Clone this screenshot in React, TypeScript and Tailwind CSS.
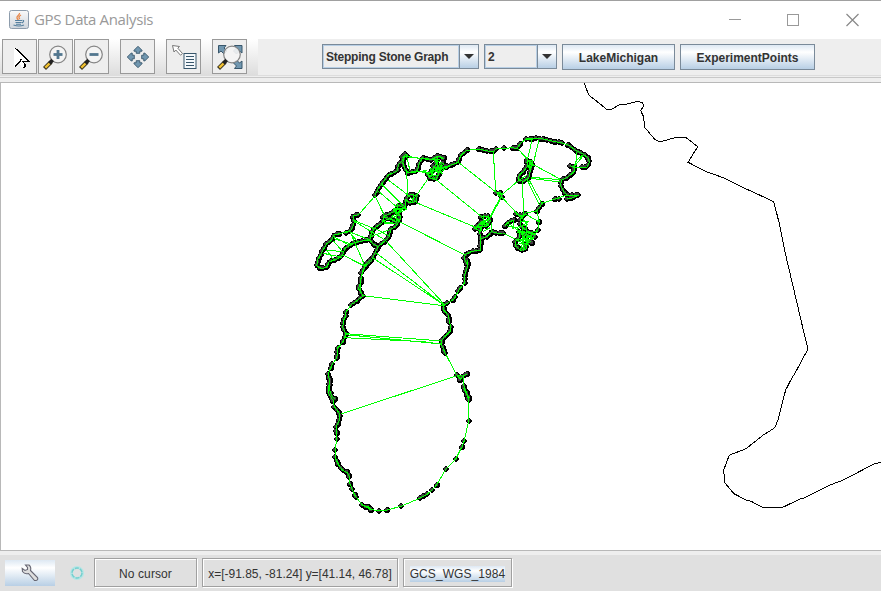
import React from "react";

type Pt = [number, number];

// Survey tracks are stored in third-pixel units relative to a tile origin.
function tile(ox: number, oy: number, s: string): Pt[] {
  return s.trim().split(/\s+/).map((p) => {
    const [x, y] = p.split(",").map(Number);
    return [ox + x / 3, oy + y / 3] as Pt;
  });
}
const A = (s: string) => tile(310, 140, s);
const B = (s: string) => tile(440, 125, s);
const C = (s: string) => tile(310, 260, s);
const D = (s: string) => tile(310, 380, s);

const tracks: Pt[][] = [
  A("195,165 205,145 218,128 235,105 262,93 265,75 278,60 286,42 278,68 285,88 295,98 322,92 328,70 338,54 362,60 385,48 402,55"),
  A("286,42 294,48 276,52"),
  A("385,48 378,72 365,95 352,103 362,116 378,118 385,105 392,85 412,78"),
  A("368,78 385,88 398,70"),
  A("292,174 302,163 322,168 318,185 298,188 288,178 285,205 265,195 258,210 242,220 220,230 218,248 195,263 184,280 179,300 190,313 205,320 222,305 238,290 242,268 258,258 270,240 270,225 258,215"),
  A("220,230 240,236 255,244 266,240"),
  A("179,300 155,303 128,310 105,325 98,345 80,358 58,365 50,382 35,386 20,378 24,358 38,332 50,312 65,300 72,285 88,282"),
  A("108,278 121,272 128,262 133,245 129,228 145,224"),
  A("205,320 192,345 182,365 166,378 160,390"),
  B("0,135 20,125 55,112 62,92 80,76"),
  B("0,95 8,103"),
  B("118,73 145,78 160,80 168,72"),
  B("218,68 232,71 240,56"),
  B("258,42 275,42"),
  B("287,39 310,42 345,50 365,54"),
  B("385,60 410,78 430,88 445,100 448,112 440,127 426,126"),
  B("390,122 405,126 402,140 385,155 365,165 362,180 370,198 380,210 400,211 416,210 397,219 380,222"),
  B("345,222 357,221"),
  B("305,238 298,248 290,258"),
  B("262,105 277,113 270,140 266,160 250,169 235,166 238,150 252,138 262,124 262,105"),
  B("168,203 182,203 185,216"),
  B("123,275 145,273 151,288 140,303 120,304 104,311 125,290"),
  B("124,304 119,322 122,341 141,335 154,320 175,325 188,324"),
  B("122,341 121,376 96,379 77,388 72,400 82,418"),
  B("228,268 245,272 258,266 241,282 240,300 261,318 281,326 262,335 236,320 240,335 226,350 226,362 242,376 258,372 258,357 272,350"),
  B("195,302 205,292 222,285"),
  C("180,0 165,15 162,28"),
  C("153,55 152,68 145,85 155,100 159,108 144,120 124,134"),
  C("108,155 107,168 101,180 98,202 108,222 103,235 98,247"),
  C("83,264 82,280 80,295"),
  C("67,313 62,325"),
  C("54,342 60,365 58,388 65,408 75,418"),
  C("471,0 474,15 465,42 464,68"),
  C("450,85 445,94"),
  C("436,112 429,120"),
  C("412,130 400,137 401,150 416,167 418,187"),
  C("423,202 420,215 402,232 395,242 396,258 405,278"),
  C("440,346 452,357 460,347 470,342"),
  C("462,378 470,400 478,414"),
  D("59,0 56,20 57,43 70,62"),
  D("73,80 90,102 88,122 78,140 80,160"),
  D("75,232 86,255 97,270 112,278 118,290"),
  D("134,345 139,352"),
  D("157,375 168,380 176,378 174,384 184,389"),
  D("461,24 470,42 476,60"),
];

const singles: Pt[] = [
  ...A("152,418 152,400"),
  ...B("193,70 296,290 293,316 285,335 275,353"),
  ...D("75,210 80,178 120,312 127,328 208,392 231,390 273,379 331,354 338,347 351,343 367,330 380,314 408,267 437,237 456,200 463,182 476,122 450,0"),
];

const edges: Pt[][] = [
  A("286,48 324,54 390,60 345,57 290,50"),
  A("290,50 300,92"),
  A("290,95 293,165"),
  A("353,118 320,165"),
  A("195,168 145,225"),
  A("195,168 225,230"),
  A("203,152 265,205"),
  A("216,134 280,198"),
  A("235,120 295,166"),
  A("292,165 322,188"), A("322,165 297,188"), A("310,162 308,190"),
  A("250,205 290,207 262,222 285,200 245,230 270,240"),
  A("262,190 258,250 215,245 270,225 248,210 286,205"),
  A("338,90 375,118 360,85 396,100 372,58 402,72 365,105 388,105"),
  A("382,48 384,100 420,78 352,98"), A("300,98 350,92"), A("322,92 358,102"), A("360,108 392,68"),
  A("135,245 225,300"), A("134,242 195,267"), A("120,275 165,378"), A("120,276 180,300"), A("120,278 143,305"),
  A("70,302 102,340"), A("72,296 128,313"), A("72,290 122,318"), A("50,330 72,362"), A("50,330 98,335"), A("40,340 95,352"), A("100,345 165,380"), A("85,282 121,272"),
  A("160,388 152,420 153,460"),
  A("182,290 242,268"), A("195,265 240,290"), A("222,250 250,252"),
  [[434, 178], [482, 217]],
  [[417, 203], [475, 227]],
  [[400, 222], [465, 255]],
  [[385, 240], [444, 304]],
  [[375, 252], [444, 305]],
  [[373, 258], [444, 305]],
  [[353, 260], [363, 265]],
  B("55,112 170,203"), B("80,76 118,73"), B("168,72 218,68"), B("160,80 167,200 182,218"),
  B("182,216 142,290"), B("184,218 150,280 120,300"), B("185,216 240,275"), B("185,209 238,165"), B("248,169 250,266"),
  B("232,70 265,105"), B("240,56 258,42 287,39"), B("277,42 262,105"), B("297,45 282,107"), B("365,54 385,60"),
  B("278,118 360,162"), B("272,157 362,164"), B("272,160 360,171"), B("262,165 298,240"), B("268,166 306,236"),
  B("408,82 410,105 402,125"), B("430,92 400,128"), B("428,90 405,110"), B("403,128 440,127"), B("305,235 345,222 380,210 416,210"),
  B("254,265 290,258 298,290 293,316 275,345"), B("258,268 296,290"), B("188,324 225,342 270,345"),
  B("205,295 240,320 270,325 230,315"), B("200,302 235,310 265,290 240,290"), B("222,285 218,310 262,300 240,270"),
  B("230,322 285,325 235,350 275,335 250,375 248,310"), B("228,345 265,360 240,320 280,340 230,360 260,345"), B("260,300 262,355 242,372 255,330 293,316"),
  B("122,275 145,300 120,295 148,280 130,272 135,304 105,310"), B("102,308 122,320 128,298"), B("155,295 155,320"), B("128,320 150,308"),
  B("262,108 282,120 265,125 278,108 268,105 272,140 260,110"), B("238,165 262,150"), B("168,203 185,207 175,213"),
  C("162,28 153,55"), C("160,107 400,137"), C("108,221 395,243"), C("108,224 395,252"), C("105,233 340,245 395,253"),
  C("124,134 108,155"), C("98,247 83,264"), C("80,295 67,313 54,342"), C("464,68 447,90 432,117 412,130"), C("418,187 423,202"),
  C("405,278 440,346"), C("460,350 462,378"), C("445,345 463,350"),
  [[456, 376], [341, 414]],
  D("70,62 73,80"), D("80,160 80,178 75,210 76,232"), D("118,290 120,312 134,345 157,375"), D("176,378 180,388 163,378 188,390"),
  D("184,389 208,392 231,390 273,379 331,354 351,343 367,330 380,314 408,267 437,237 456,200 463,182 476,122 476,60"),
];

const coast: Pt[] = [
  ...tile(575, 75, "28,24 41,60 67,80 95,103 110,103 133,89 155,87 188,79 202,83 206,92 197,107 205,123 210,158 240,194 255,200 275,195 300,188 332,187 368,215 339,262 397,291 445,308 500,336 545,356 596,380 612,442 632,540"),
  ...tile(680, 330, "370,0 384,58 368,86 345,130 335,145 317,180 305,225 295,268 285,292 270,303 250,315 198,356 165,369 150,374 146,380 131,420 134,458 162,491 200,511 213,514 248,532 308,532 362,506 375,503 450,465 490,450 580,403 603,396"),
];

function sample(pts: Pt[], step: number): Pt[] {
  const out: Pt[] = [pts[0]];
  let carry = 0;
  for (let i = 1; i < pts.length; i++) {
    const [x0, y0] = pts[i - 1];
    const [x1, y1] = pts[i];
    const len = Math.hypot(x1 - x0, y1 - y0);
    let d = step - carry;
    while (d <= len) {
      out.push([x0 + ((x1 - x0) * d) / len, y0 + ((y1 - y0) * d) / len]);
      d += step;
    }
    carry = len - (d - step);
  }
  out.push(pts[pts.length - 1]);
  return out;
}

const str = (p: Pt[]) => p.map(([x, y]) => `${x.toFixed(1)},${y.toFixed(1)}`).join(" ");

function GpsMap() {
  const dots = [...tracks.flatMap((t) => sample(t, 3.9)), ...singles];
  return (
    <svg className="block h-[467px] w-[880px]" viewBox="1 83 880 467" shapeRendering="crispEdges" fill="none">
      <polyline points={str(coast)} stroke="#000" strokeWidth="1" />
      {tracks.map((t, i) => (
        <polyline key={i} points={str(t)} stroke="#000" strokeWidth="4.4" strokeLinejoin="round" strokeLinecap="round" />
      ))}
      {dots.map(([x, y], i) => (
        <path
          key={i}
          transform={`translate(${Math.round(x) - 3} ${Math.round(y) - 3})`}
          d={i % 3 === 1 ? "M2 0H5V1H6V5H5V6H1V5H0V2H1V1H2Z" : "M2 0H4V1H5V2H6V4H5V5H4V6H2V5H1V4H0V2H1V1H2Z"}
          fill="#000"
        />
      ))}
      {dots.map(([x, y], i) => (
        <rect key={i} x={Math.round(x) - 2} y={Math.round(y) - 2} width="3" height="3" fill="#404040" />
      ))}
      {tracks.map((t, i) => (
        <polyline key={i} points={str(t)} stroke="#00ff00" strokeWidth="1" />
      ))}
      {edges.map((t, i) => (
        <polyline key={i} points={str(t)} stroke="#00ff00" strokeWidth="1" />
      ))}
    </svg>
  );
}

function Magnifier({ plus, children }: { plus?: boolean; children?: React.ReactNode }) {
  return (
    <svg className="h-[33px] w-[33px]" viewBox="0 0 33 33" fill="none">
      {children}
      <circle cx="19" cy="14.5" r="8.3" fill="#f4f4f4" fillOpacity="0.9" stroke="#858585" strokeWidth="1.2" />
      <path d="M5.5 28.5 L12 22" stroke="#3a3420" strokeWidth="4.2" />
      <path d="M6.3 27.7 L11.5 22.5" stroke="#f2c230" strokeWidth="2.4" />
      <path d="M10.5 23.5 L13.6 20" stroke="#222" strokeWidth="3.6" />
      {!children && <path d="M14.5 14.5 H23.5" stroke="#52778f" strokeWidth="2.8" />}
      {plus && <path d="M19 10 V19" stroke="#52778f" strokeWidth="2.8" />}
    </svg>
  );
}

function ToolButton({ children, className = "" }: { children: React.ReactNode; className?: string }) {
  return (
    <button className={`h-[35px] w-[35px] shrink-0 border border-[#999] bg-[#eee] ${className}`}>{children}</button>
  );
}

function Combo({ label, className }: { label: string; className: string }) {
  return (
    <div className={`flex h-[25px] border border-[#7a8a99] text-[12px] font-bold ${className}`}>
      <div className="flex-1 border border-[#b8cfe5] pl-[2px] leading-[22px] tracking-[-0.22px] whitespace-nowrap">{label}</div>
      <div className="flex w-[19px] items-center justify-center border-l border-[#7a8a99] bg-[linear-gradient(#dde8f3,#fff_30%,#b8cfe5)]">
        <svg className="h-[5px] w-[10px]" viewBox="0 0 10 5"><path d="M0 0H10L5 5Z" fill="#333" /></svg>
      </div>
    </div>
  );
}

function PushButton({ label, className }: { label: string; className: string }) {
  return (
    <button className={`h-[26px] border border-[#7a8a99] bg-[linear-gradient(#dde8f3,#fff_30%,#b8cfe5)] pt-[2px] text-[12px] font-bold ${className}`}>{label}</button>
  );
}

const etched = "flex h-[29px] items-center justify-center border border-[#a0a0a0] pt-[2px] whitespace-nowrap shadow-[inset_1px_1px_0_#fff,1px_1px_0_#fff]";

export default function App() {
  return (
    <div className="flex h-[591px] w-[881px] flex-col overflow-hidden bg-[#eee] font-['Liberation_Sans',sans-serif] text-[#333]">
      <header className="flex h-[39px] items-center border-t border-[#a0a0a0] bg-white pl-[9px]">
        <svg className="mt-[-2px] h-[19px] w-[20px]" viewBox="0 0 20 19" fill="none">
          <defs>
            <linearGradient id="cup" x2="0" y2="1"><stop stopColor="#fafafa" /><stop offset="1" stopColor="#cfd5dc" /></linearGradient>
          </defs>
          <rect x="0.5" y="0.5" width="19" height="18" rx="2" fill="url(#cup)" stroke="#8d9cac" />
          <path d="M10.5 3 C11 5 7 6 8 8 Q8.2 9 9.5 10 M12 5 C9.5 6.5 9.5 7.5 10.8 9" stroke="#e8884a" strokeWidth="1.3" />
          <path d="M6 10.5 H13 M6.5 12.5 H12.5 M13.5 10.2 Q16 10.5 13 13 M4.5 15 Q10 17 15 15 M7 14.2 H12" stroke="#55809f" strokeWidth="1.1" />
        </svg>
        <h1 className="mt-[-2px] ml-[5px] w-[120px] text-[15px] tracking-[-0.36px] whitespace-nowrap text-[#999] font-['Open_Sans',sans-serif]">GPS Data Analysis</h1>
        <svg className="mt-[-1px] ml-auto mr-[22px] h-[14px] w-[130px]" viewBox="0 0 130 14" fill="none" stroke="#999" strokeWidth="1">
          <path d="M0 6.5 H12" /><rect x="58.5" y="1.5" width="11" height="11" /><path d="M117.5 1 L129.5 13 M129.5 1 L117.5 13" stroke="#888" strokeWidth="1.2" />
        </svg>
      </header>

      <section className="flex h-[44px] flex-col">
        <div className="flex h-[37px] border-b border-[#ddd]">
          <div className="flex w-[258px] bg-[linear-gradient(#fff,#ddd)] pl-[2px]">
            <ToolButton>
              <svg className="h-[33px] w-[33px]" viewBox="0 0 33 33" fill="none" shapeRendering="crispEdges">
                <path d="M10.5 7.5 V28 L16 22 L19 28 L23 25 L20.5 21 H27Z" fill="#fff" />
                <path d="M12 8 L26.5 21.5 H19 M11.5 27.5 L17.5 21 L18 19 M19 21 L22 24 V27 L20 28" stroke="#000" strokeWidth="1.3" />
              </svg>
            </ToolButton>
            <ToolButton className="ml-px"><Magnifier plus /></ToolButton>
            <ToolButton className="ml-px"><Magnifier /></ToolButton>
            <ToolButton className="ml-[11px]">
              <svg className="h-[33px] w-[33px]" viewBox="0 0 33 33" fill="#7197b0" stroke="#38566b" strokeWidth="0.9">
                {[0, 90, 180, 270].map((a) => (
                  <path key={a} transform={`rotate(${a} 17 17)`} d="M17 6.3 L21 10.3 V11.2 H18.8 V13.3 H15.2 V11.2 H13 V10.3Z" />
                ))}
              </svg>
            </ToolButton>
            <ToolButton className="ml-[11px]">
              <svg className="h-[33px] w-[33px]" viewBox="0 0 33 33" fill="none">
                <path d="M5.5 5.5 L12.5 6.5 L10.8 8.2 L15.5 13.5 L13.5 15.2 L8.8 10 L7 12Z" fill="#fff" stroke="#777" />
                <rect x="17" y="13.5" width="12" height="15" fill="#f5f9fc" stroke="#38566b" />
                <path d="M19 16.5H27 M19 19.5H27 M19 22.5H27 M19 25.5H27" stroke="#38566b" />
              </svg>
            </ToolButton>
            <ToolButton className="ml-[11px]">
              <Magnifier>
                <g fill="#7197b0" stroke="#38566b" strokeWidth="1">
                  <path d="M5.5 5.5 H13 L11 8 L14 11 L11 14 L8 11 L5.5 13Z" />
                  <path d="M29 5.5 H21.5 L23.5 8 L20.5 11 L23.5 14 L26.5 11 L29 13Z" />
                  <path d="M29 28.5 H21.5 L23.5 26 L20.5 23 L23.5 20 L26.5 23 L29 21Z" />
                </g>
              </Magnifier>
            </ToolButton>
          </div>
          <div className="flex flex-1 pt-[5px] pl-[64px]">
            <Combo label="Stepping Stone Graph" className="w-[157px]" />
            <Combo label="2" className="ml-[5px] w-[73px]" />
            <PushButton label="LakeMichigan" className="ml-[5px] w-[113px]" />
            <PushButton label="ExperimentPoints" className="ml-[5px] w-[135px]" />
          </div>
        </div>
        <div className="mt-px h-[6px] border-t border-b border-t-[#c8c8c8] border-b-[#b8b8b8]" />
      </section>

      <main className="h-[468px] border-b border-l border-[#b8b8b8] bg-white">
        <GpsMap />
      </main>

      <footer className="mt-[4px] flex h-[36px] bg-[#e0e0e0] pt-[3px] pl-[5px] text-[12px]">
        <button className="mt-[2px] flex h-[26px] w-[50px] items-center justify-center bg-[linear-gradient(#dde8f3,#fff_30%,#b8cfe5)]">
          <svg className="h-[18px] w-[18px]" viewBox="0 0 18 18" fill="#ddd" stroke="#666673" strokeWidth="1.1">
            <path d="M4.5 1 L8 1 Q10.5 3 9.5 6.5 L16.5 13.5 Q17.5 16 15 16.5 L13.5 16.5 L7.5 9.5 Q3.5 10.5 1.5 7.5 L1.2 4.5 L4 6.5 L6.5 5.5 L6.5 3.5Z" />
          </svg>
        </button>
        <svg className="mt-[8px] ml-[15px] h-[14px] w-[14px]" viewBox="0 0 14 14" fill="none">
          <circle cx="7" cy="7" r="5.5" stroke="#b6e6e6" strokeWidth="3" />
          <circle cx="7" cy="7" r="5" stroke="#76cfce" strokeWidth="1.5" strokeDasharray="4 1.2" />
        </svg>
        <div className={`${etched} ml-[10px] w-[103px] text-[12px] tracking-[0.1px]`}>No cursor</div>
        <div className={`${etched} ml-[5px] w-[196px] tracking-[-0.02px]`}>x=[-91.85, -81.24] y=[41.14, 46.78]</div>
        <div className={`${etched} ml-[5px] w-[109px]`}>
          <span className="h-[16px] bg-[linear-gradient(#dde8f3,#fff_30%,#b8cfe5)] leading-[16px] tracking-[0.08px]">GCS_WGS_1984</span>
        </div>
      </footer>
    </div>
  );
}
